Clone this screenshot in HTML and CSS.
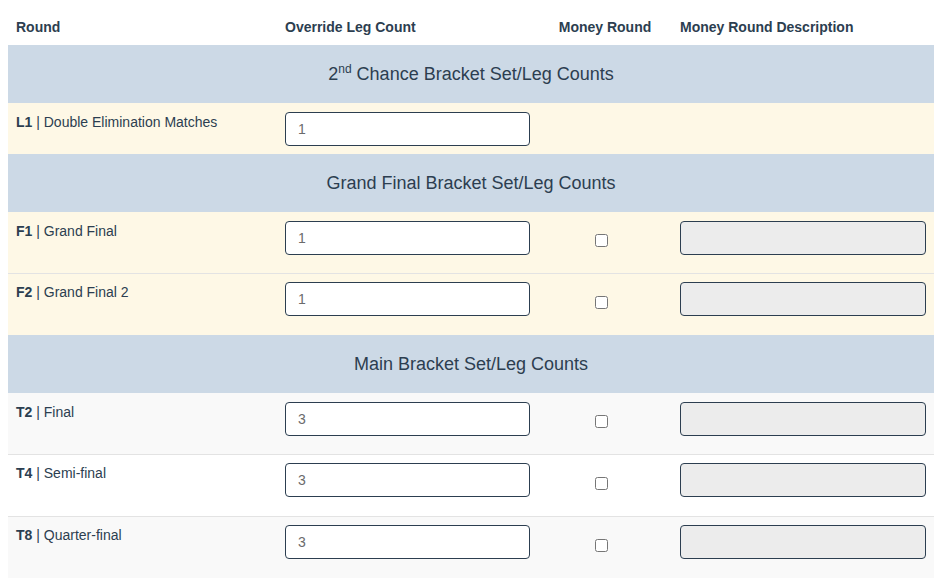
FILE: index.html
```html
<!DOCTYPE html>
<html>
<head>
<meta charset="utf-8">
<link rel="stylesheet" href="styles.css">
</head>
<body>
<table class="legs">
  <colgroup>
    <col class="c-round">
    <col class="c-count">
    <col class="c-money">
    <col class="c-desc">
  </colgroup>
  <thead>
    <tr>
      <th>Round</th>
      <th>Override Leg Count</th>
      <th class="center">Money Round</th>
      <th>Money Round Description</th>
    </tr>
  </thead>
  <tbody>
    <tr class="group"><td colspan="4">2<sup>nd</sup> Chance Bracket Set/Leg Counts</td></tr>
    <tr class="cream">
      <td><b>L1</b> | Double Elimination Matches</td>
      <td><input class="field" type="text" value="1"></td>
      <td></td>
      <td></td>
    </tr>
    <tr class="group"><td colspan="4">Grand Final Bracket Set/Leg Counts</td></tr>
    <tr class="cream">
      <td><b>F1</b> | Grand Final</td>
      <td><input class="field" type="text" value="1"></td>
      <td class="center"><input class="check" type="checkbox"></td>
      <td><input class="field disabled" type="text" disabled></td>
    </tr>
    <tr class="cream">
      <td><b>F2</b> | Grand Final 2</td>
      <td><input class="field" type="text" value="1"></td>
      <td class="center"><input class="check" type="checkbox"></td>
      <td><input class="field disabled" type="text" disabled></td>
    </tr>
    <tr class="group"><td colspan="4">Main Bracket Set/Leg Counts</td></tr>
    <tr class="odd">
      <td><b>T2</b> | Final</td>
      <td><input class="field" type="text" value="3"></td>
      <td class="center"><input class="check" type="checkbox"></td>
      <td><input class="field disabled" type="text" disabled></td>
    </tr>
    <tr class="even">
      <td><b>T4</b> | Semi-final</td>
      <td><input class="field" type="text" value="3"></td>
      <td class="center"><input class="check" type="checkbox"></td>
      <td><input class="field disabled" type="text" disabled></td>
    </tr>
    <tr class="odd">
      <td><b>T8</b> | Quarter-final</td>
      <td><input class="field" type="text" value="3"></td>
      <td class="center"><input class="check" type="checkbox"></td>
      <td><input class="field disabled" type="text" disabled></td>
    </tr>
  </tbody>
</table>
</body>
</html>
```
FILE: styles.css
```css
html, body {
  margin: 0;
  padding: 0;
  background: #ffffff;
}
body {
  font-family: "Liberation Sans", Arial, sans-serif;
  font-size: 14px;
  line-height: 1.5;
  color: #2c3e50;
}
.legs {
  margin-left: 8px;
  width: 926px;
  table-layout: fixed;
  border-collapse: collapse;
}
.c-round { width: 269px; }
.c-count { width: 261px; }
.c-money { width: 134px; }
.c-desc { width: 262px; }

.legs th {
  text-align: left;
  font-weight: bold;
  font-size: 14px;
  padding: 17px 8px 7px;
  height: 21px;
  color: #2c3e50;
  vertical-align: bottom;
}
.legs th.center, .legs td.center { text-align: center; }

.legs td {
  padding: 8px;
  vertical-align: top;
  border-top: 1px solid #e3e3e3;
}
.legs td b { font-weight: bold; }

.group td {
  background: #ccd9e6;
  text-align: center;
  vertical-align: middle;
  font-size: 18px;
  height: 42px;
  padding: 8px;
  border-top: none;
  color: #2c3e50;
}
.group sup {
  font-size: 12px;
  line-height: 0;
  vertical-align: 7px;
}
.cream td { background: #fef8e6; }
.group + tr td { border-top: none; padding-top: 9px; }
.group + tr .check { margin-top: 13px; margin-bottom: 18px; }
.odd td { background: #f9f9f9; }
.even td { background: #ffffff; }

.field {
  display: block;
  box-sizing: border-box;
  width: 100%;
  height: 34px;
  margin: 0;
  padding: 0 12px;
  border: 1px solid #2c3e50;
  border-radius: 4px;
  background: #ffffff;
  font-family: "Liberation Sans", Arial, sans-serif;
  font-size: 14px;
  color: #6b6b6b;
  outline: none;
}
.field.disabled { background: #ececec; }

.check {
  width: 13px;
  height: 13px;
  margin: 14px 0 18px;
  vertical-align: top;
  position: relative;
  left: -4px;
}
```
